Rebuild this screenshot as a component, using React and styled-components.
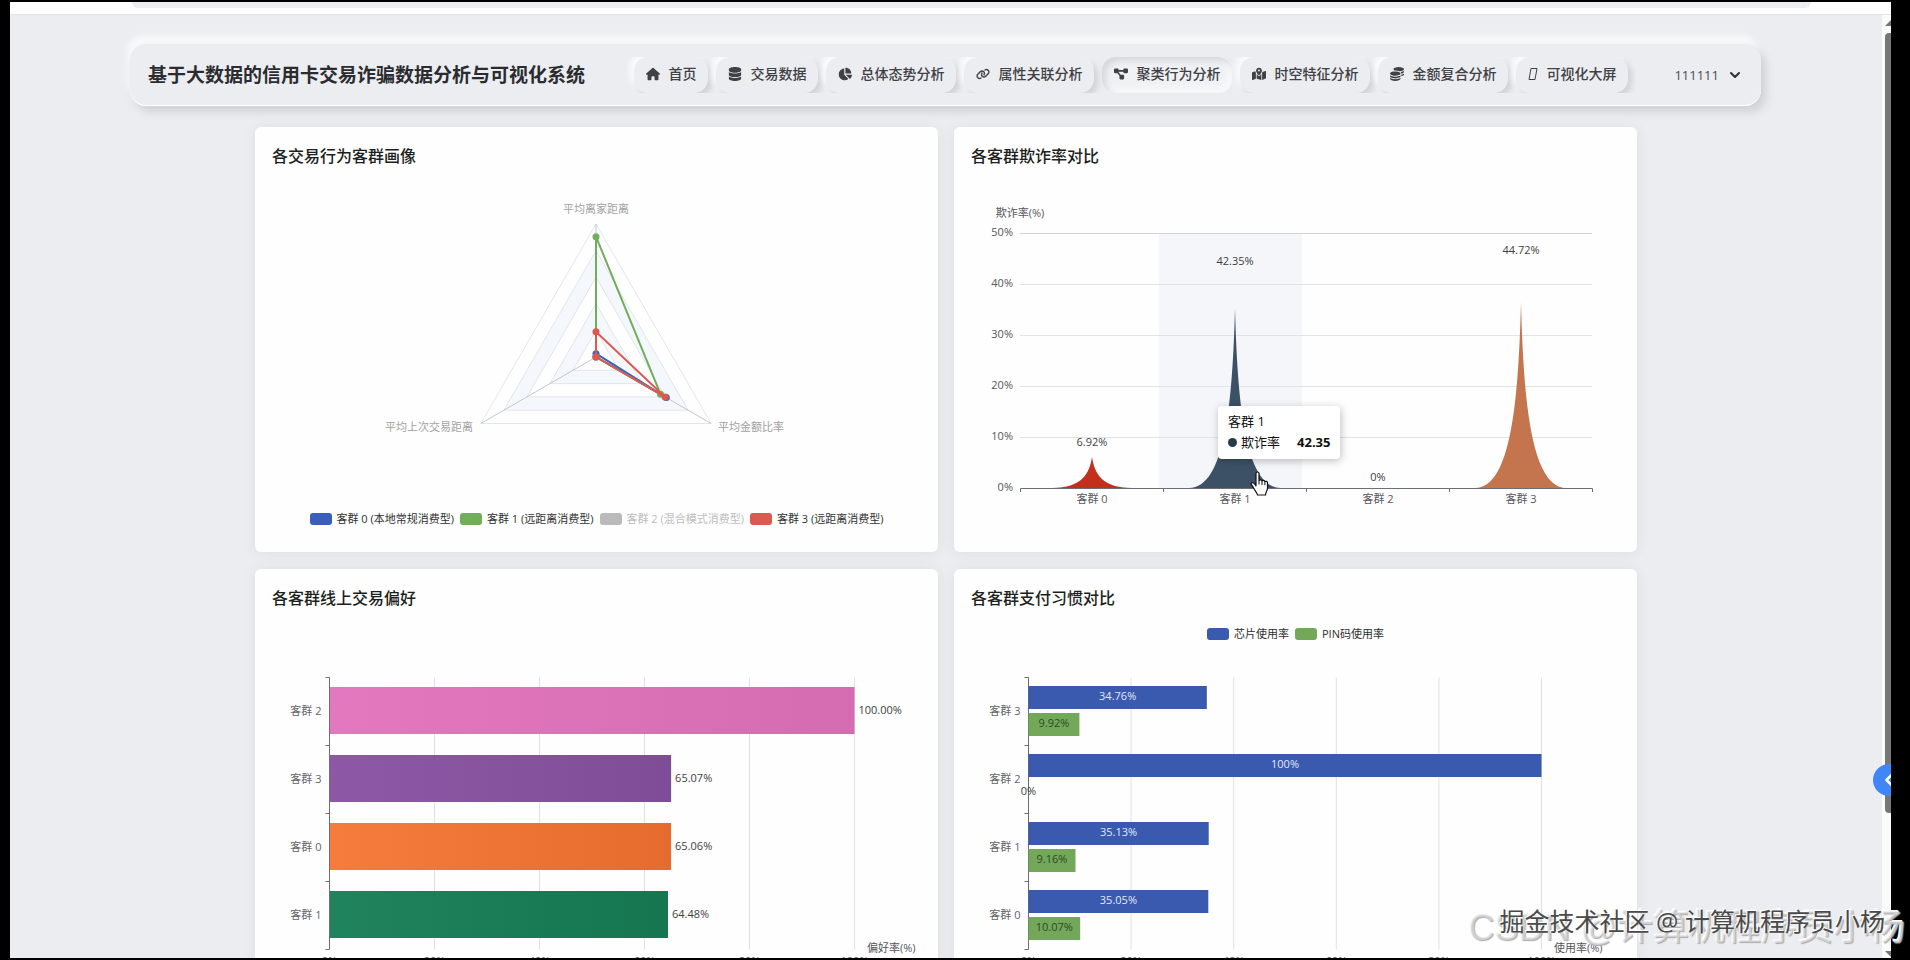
import React from "react";
import styled, { createGlobalStyle, css } from "styled-components";
import {
  FaHouse,
  FaDatabase,
  FaChartPie,
  FaLink,
  FaDiagramProject,
  FaMapLocationDot,
  FaCoins
} from "react-icons/fa6";
import { FiChevronDown, FiChevronLeft } from "react-icons/fi";

const GlobalStyle = createGlobalStyle`
  * {
    box-sizing: border-box;
  }

  body {
    margin: 0;
    background: #000;
    font-family: "Open Sans", "Noto Sans CJK SC", sans-serif;
    color: #303133;
  }

  button {
    font: inherit;
    border: 0;
    padding: 0;
    background: none;
    cursor: pointer;
  }
`;

const Screen = styled.div`
  position: relative;
  display: flex;
  flex-direction: column;
  height: 100vh;
  padding: 2px 19px 2px 10px;
  overflow: hidden;
  background: #000;
`;

const BrowserBar = styled.div`
  flex: none;
  height: 13px;
  padding: 0 80px 0 122px;
  background: #fff;
  border-bottom: 1px solid #e3e4e7;
`;

const AddressBar = styled.div`
  height: 6px;
  border-radius: 0 0 8px 8px;
  background: #edeef2;
`;

const Viewport = styled.div`
  position: relative;
  flex: 1;
  min-height: 0;
  display: flex;
  overflow: hidden;
  background: #ecedf1;
`;

const Page = styled.div`
  flex: 1;
  min-width: 0;
  height: 100%;
  overflow: hidden;
`;

const Header = styled.header`
  display: flex;
  align-items: center;
  height: 62px;
  margin: 29px 121px 0 120px;
  padding: 0 18px;
  border-radius: 16px;
  background: #ecedf1;
  box-shadow: inset 0 -1px 0 #fff, 5px 6px 10px #cfd1d6, -3px -9px 5px #f7f8fa;
`;

const Brand = styled.h1`
  margin: 0;
  font-size: 19px;
  font-weight: 700;
  line-height: 24px;
  white-space: nowrap;
  color: #2a2c30;
`;

/* clips the link shadows above and below the row */
const Nav = styled.nav`
  display: flex;
  gap: 8px;
  margin-left: auto;
  padding: 0 8px;
  overflow: hidden;
`;

const NavLink = styled.a`
  display: flex;
  align-items: center;
  gap: 8px;
  height: 36px;
  padding: 0 12px 2px;
  border-radius: 14px;
  font-size: 14px;
  font-weight: 500;
  line-height: 20px;
  white-space: nowrap;
  text-decoration: none;
  color: #3f4145;
  box-shadow: 4px 4px 6px #d0d2d7, -4px -4px 6px #fcfcfd;

  svg {
    width: auto;
    height: 14px;
  }

  ${props =>
    props.$active &&
    css`
      background: #f0f1f4;
      box-shadow: inset 4px 4px 6px #d6d8dc, inset -4px -4px 6px #f9fafb;
    `}
`;

const UserMenu = styled.button`
  display: flex;
  align-items: center;
  gap: 8px;
  margin-left: 38px;
  font-size: 13px;
  line-height: 20px;
  color: #4a4c50;

  svg {
    width: 16px;
    height: 16px;
    color: #303133;
  }
`;

const Grid = styled.main`
  display: grid;
  grid-template-columns: 1fr 1fr;
  gap: 17px 16px;
  max-width: 1382px;
  margin: 21px auto 0;
`;

const Card = styled.section`
  position: relative;
  min-height: 425px;
  padding-top: 19px;
  border-radius: 6px;
  background: #fefefe;
  box-shadow: 0 1px 14px rgba(70, 60, 20, 0.08);
`;

const CardTitle = styled.h2`
  margin: 0;
  padding: 0 17px;
  font-size: 16px;
  font-weight: 500;
  line-height: 20px;
  color: #1d1e20;
`;

const Chart = styled.svg`
  display: block;
  width: 100%;
  font-size: 11px;
`;

const Legend = styled.div`
  display: flex;
  justify-content: center;
  gap: 6px;
  padding-top: ${props => (props.$top ? "14px" : "0")};
`;

const LegendItem = styled.button`
  display: flex;
  align-items: center;
  gap: 5px;
  font-size: 11px;
  line-height: 24px;
  white-space: nowrap;
  color: ${props => (props.$off ? "#bdbdbd" : "#303030")};

  &::before {
    content: "";
    width: 22px;
    height: 12px;
    border-radius: 3px;
    background: ${props => (props.$off ? "#bababa" : props.$color)};
  }
`;

const Tooltip = styled.div`
  position: absolute;
  left: 264px;
  top: 279px;
  padding: 5px 10px 6px;
  border-radius: 4px;
  background: #fff;
  box-shadow: 1px 2px 9px rgba(0, 0, 0, 0.25);
  font-size: 13px;
  line-height: 21px;
  white-space: nowrap;
  color: #111;
`;

const TooltipRow = styled.div`
  display: flex;
  align-items: center;
  gap: 4px;

  &::before {
    content: "";
    width: 9px;
    height: 9px;
    border-radius: 50%;
    background: #253b4a;
  }

  strong {
    margin-left: 13px;
  }
`;

const Pointer = styled.svg`
  position: absolute;
  left: 295px;
  top: 344px;
  width: 22px;
  height: 26px;
`;

const Scrollbar = styled.div`
  flex: none;
  display: flex;
  flex-direction: column;
  align-items: flex-end;
  width: 9px;
  background: #fbfbfc;

  svg {
    flex: none;
    width: 6px;
    height: 18px;
  }
`;

const Track = styled.div`
  flex: 1;
  width: 6px;
`;

const Thumb = styled.div`
  width: 6px;
  height: 86%;
  border-radius: 4px 0 0 4px;
  background: #757678;
`;

const SideToggle = styled.button`
  position: absolute;
  right: -14px;
  top: 749px;
  display: flex;
  align-items: center;
  justify-content: center;
  width: 32px;
  height: 32px;
  border-radius: 50%;
  background: #3f86f6;
  color: #fff;

  svg {
    width: 20px;
    height: 20px;
  }
`;

const Watermark = styled.div`
  position: absolute;
  z-index: 2;
  white-space: nowrap;
  pointer-events: none;
`;

const BigWatermark = styled(Watermark)`
  right: 5px;
  bottom: 8px;
  font-family: "Liberation Sans", "Noto Sans CJK SC", sans-serif;
  font-size: 36px;
  line-height: 48px;
  color: rgba(232, 232, 234, 0.6);
  text-shadow: 1px 1px 1px #aaa, -1px -1px 0 #fff;
`;

const SmallWatermark = styled(Watermark)`
  right: 25px;
  bottom: 21px;
  font-size: 25px;
  line-height: 36px;
  color: #4a4a4a;
  text-shadow: -1px -1px 0 #fff, -1px 0 0 #eee;
`;

const BoxIcon = () => (
  <svg viewBox="0 0 10 14" fill="none" stroke="currentColor">
    <path d="M3 1.5h6l-2 11h-6z" />
  </svg>
);

const links = [
  { label: "首页", icon: FaHouse },
  { label: "交易数据", icon: FaDatabase },
  { label: "总体态势分析", icon: FaChartPie },
  { label: "属性关联分析", icon: FaLink },
  { label: "聚类行为分析", icon: FaDiagramProject, active: true },
  { label: "时空特征分析", icon: FaMapLocationDot },
  { label: "金额复合分析", icon: FaCoins },
  { label: "可视化大屏", icon: BoxIcon }
];

const segments = [
  { name: "客群 0 (本地常规消费型)", color: "#3a5fbb" },
  { name: "客群 1 (远距离消费型)", color: "#72ad5b" },
  { name: "客群 2 (混合模式消费型)", off: true },
  { name: "客群 3 (远距离消费型)", color: "#dd584e" }
];

const CX = 341;
const CY = 191;
const R = 133;

// values run top, bottom left, bottom right, each 0..1
function radarPoints(values) {
  return values.map((v, i) => {
    const angle = -Math.PI / 2 - (i * 2 * Math.PI) / 3;
    return [CX + R * v * Math.cos(angle), CY + R * v * Math.sin(angle)];
  });
}

const toPath = points => `M${points.map(p => p.join(",")).join("L")}Z`;

const radarSeries = [
  { color: "#3a5fbb", values: [0.025, 0, 0.61] },
  { color: "#72ad5b", values: [0.905, 0, 0.56] },
  { color: "#dd584e", values: [0.19, 0, 0.6] }
];

function RadarChart() {
  return (
    <Chart viewBox="0 0 683 341">
      {[1, 0.8, 0.6, 0.4, 0.2].map((v, i) => (
        <path
          key={v}
          d={toPath(radarPoints([v, v, v]))}
          fill={i % 2 ? "#f4f7fb" : "#fefefe"}
          stroke="#e2e6ec"
        />
      ))}
      {radarPoints([1, 1, 1]).map(([x, y], i) => (
        <line key={i} x1={CX} y1={CY} x2={x} y2={y} stroke="#c4c6ca" />
      ))}
      {radarSeries.map(s => (
        <g key={s.color} fill={s.color}>
          <path
            d={toPath(radarPoints(s.values))}
            fill="none"
            stroke={s.color}
            strokeWidth="2"
          />
          {radarPoints(s.values).map(([x, y], i) => (
            <circle key={i} cx={x} cy={y} r="3.5" />
          ))}
        </g>
      ))}
      <g fill="#a2a2a2">
        <text x={CX} y="47" textAnchor="middle">
          平均离家距离
        </text>
        <text x="218" y="265" textAnchor="end">
          平均上次交易距离
        </text>
        <text x="463" y="265">
          平均金额比率
        </text>
      </g>
    </Chart>
  );
}

const fraud = [
  { name: "客群 0", value: "6.92%", color: "#c2301c", peak: 291, half: 40, labelY: 280 },
  { name: "客群 1", value: "42.35%", color: "#3d5166", peak: 142, half: 46, labelY: 99 },
  { name: "客群 2", value: "0%", labelY: 315 },
  { name: "客群 3", value: "44.72%", color: "#c4754d", peak: 136, half: 46, labelY: 88 }
];

function spike(cx, base, peak, half) {
  const mid = peak + (base - peak) * 0.53;
  return (
    `M${cx - half},${base} C${cx - 10},${base} ${cx - 2.5},${mid} ${cx},${peak} ` +
    `C${cx + 2.5},${mid} ${cx + 10},${base} ${cx + half},${base}Z`
  );
}

function FraudChart() {
  return (
    <Chart viewBox="0 0 683 386">
      <rect x="205" y="68" width="143" height="254" fill="#f4f6fa" />
      {[50, 40, 30, 20, 10, 0].map((v, i) => (
        <g key={v}>
          {v > 0 && (
            <line
              x1="66"
              x2="638"
              y1={67.5 + i * 51}
              y2={67.5 + i * 51}
              stroke={i ? "#e0e3e8" : "#ccd4d9"}
            />
          )}
          <text x="59" y={70 + i * 51} textAnchor="end" fill="#55575b">
            {v}%
          </text>
        </g>
      ))}
      <text x="66" y="51" textAnchor="middle" fill="#55575b">
        欺诈率(%)
      </text>
      {fraud.map((d, i) => {
        const cx = 138 + i * 143;
        return (
          <g key={d.name} textAnchor="middle">
            {d.color && <path d={spike(cx, 322, d.peak, d.half)} fill={d.color} />}
            <text x={cx} y={d.labelY} fill="#3c3e42">
              {d.value}
            </text>
            <text x={cx} y="337" fill="#55575b">
              {d.name}
            </text>
          </g>
        );
      })}
      <path
        d="M66.500,326v-3.500h572v3.500M209.500,322v4M352.500,322v4M495.500,322v4"
        fill="none"
        stroke="#6b6e74"
      />
    </Chart>
  );
}

const online = [
  { name: "客群 2", value: 100, colors: ["#e378be", "#d56bb0"] },
  { name: "客群 3", value: 65.07, colors: ["#8d59a7", "#7f4d97"] },
  { name: "客群 0", value: 65.06, colors: ["#f57c3b", "#e56c2e"] },
  { name: "客群 1", value: 64.48, colors: ["#1f835d", "#157650"] }
];

function CategoryAxis({ top, x, names }) {
  return (
    <g>
      <path
        d={`M${x - 4},${top}h4v272h-4${[68, 136, 204]
          .map(y => `M${x - 4},${top + y}h4`)
          .join("")}`}
        fill="none"
        stroke="#6b6e74"
      />
      {names.map((name, i) => (
        <text key={name} x={x - 8} y={top + 37 + i * 68} textAnchor="end" fill="#626468">
          {name}
        </text>
      ))}
    </g>
  );
}

function ValueAxis({ top, x, step, title, titleX }) {
  return (
    <g fill="#55575b">
      {[0, 1, 2, 3, 4, 5].map(i => (
        <g key={i}>
          {i > 0 && (
            <line
              x1={x + i * step}
              x2={x + i * step}
              y1={top}
              y2={top + 272}
              stroke="#dfe1e5"
            />
          )}
          <text x={x + i * step} y={top + 287} textAnchor="middle">
            {i * 20}%
          </text>
        </g>
      ))}
      <text x={titleX} y={top + 274}>
        {title}
      </text>
    </g>
  );
}

function OnlineChart() {
  const x = 74.5;
  return (
    <Chart viewBox="0 0 683 386">
      <defs>
        {online.map((d, i) => (
          <linearGradient key={d.name} id={`bar${i}`}>
            <stop offset="0" stopColor={d.colors[0]} />
            <stop offset="1" stopColor={d.colors[1]} />
          </linearGradient>
        ))}
      </defs>
      <ValueAxis top={69.5} x={x} step={105} title="偏好率(%)" titleX={612} />
      {online.map((d, i) => (
        <g key={d.name}>
          <rect
            x={x}
            y={79 + i * 68}
            width={d.value * 5.25}
            height="47"
            fill={`url(#bar${i})`}
          />
          <text x={x + d.value * 5.25 + 4} y={106 + i * 68} fill="#3c3e42">
            {d.value.toFixed(2)}%
          </text>
        </g>
      ))}
      <CategoryAxis top={69.5} x={x} names={online.map(d => d.name)} />
    </Chart>
  );
}

const payments = [
  { name: "客群 3", chip: 34.76, pin: 9.92 },
  { name: "客群 2", chip: 100, pin: 0 },
  { name: "客群 1", chip: 35.13, pin: 9.16 },
  { name: "客群 0", chip: 35.05, pin: 10.07 }
];

function PaymentChart() {
  const x = 74.5;
  const scale = 5.13;
  return (
    <Chart viewBox="0 0 683 348">
      <ValueAxis top={31.5} x={x} step={102.6} title="使用率(%)" titleX={600} />
      <CategoryAxis top={31.5} x={x} names={payments.map(d => d.name)} />
      {payments.map((d, i) => (
        <g key={d.name} textAnchor="middle">
          <rect x={x} y={40 + i * 68} width={d.chip * scale} height="23" fill="#3a5ab0" />
          <text x={x + (d.chip * scale) / 2} y={54 + i * 68} fill="#e2e8f7">
            {d.chip}%
          </text>
          <rect x={x} y={67 + i * 68} width={d.pin * scale} height="23" fill="#73a75a" />
          <text
            x={x + (d.pin * scale) / 2}
            y={81 + i * 68}
            fill={d.pin ? "#2f4a26" : "#3a3c40"}
          >
            {d.pin}%
          </text>
        </g>
      ))}
    </Chart>
  );
}

export default function App() {
  return (
    <Screen>
      <GlobalStyle />
      <BrowserBar>
        <AddressBar />
      </BrowserBar>
      <Viewport>
        <Page>
          <Header>
            <Brand>基于大数据的信用卡交易诈骗数据分析与可视化系统</Brand>
            <Nav>
              {links.map(({ label, icon: Icon, active }) => (
                <NavLink key={label} href="#" $active={active}>
                  <Icon />
                  {label}
                </NavLink>
              ))}
            </Nav>
            <UserMenu type="button">
              111111
              <FiChevronDown strokeWidth={3} />
            </UserMenu>
          </Header>
          <Grid>
            <Card>
              <CardTitle>各交易行为客群画像</CardTitle>
              <RadarChart />
              <Legend>
                {segments.map(s => (
                  <LegendItem key={s.name} type="button" $color={s.color} $off={s.off}>
                    {s.name}
                  </LegendItem>
                ))}
              </Legend>
            </Card>
            <Card>
              <CardTitle>各客群欺诈率对比</CardTitle>
              <FraudChart />
              <Tooltip>
                客群 1
                <TooltipRow>
                  欺诈率 <strong>42.35</strong>
                </TooltipRow>
              </Tooltip>
              <Pointer viewBox="0 0 22 26">
                <path
                  d="M7 2.500c0-1 .7-1.500 1.500-1.500s1.500.5 1.500 1.500v7c.3-.8 2.700-.8 3 .4.500-.8 2.600-.6 2.900.7.700-.6 2.600-.3 2.600 1.200v5.200c0 3-2 4-2 7H8.500c0-2-3-4.500-4-7.300C3.800 15 2 13.500 2.200 12.600c.4-1.300 2.300-1 3.300.3L7 14.800z"
                  fill="#fff"
                  stroke="#111"
                  strokeWidth="1.200"
                  strokeLinejoin="round"
                />
                <path d="M10 9.500v4M13 10v4M15.900 10.800v3.400" stroke="#111" />
              </Pointer>
            </Card>
            <Card>
              <CardTitle>各客群线上交易偏好</CardTitle>
              <OnlineChart />
            </Card>
            <Card>
              <CardTitle>各客群支付习惯对比</CardTitle>
              <Legend $top>
                <LegendItem type="button" $color="#3a5ab0">
                  芯片使用率
                </LegendItem>
                <LegendItem type="button" $color="#73a75a">
                  PIN码使用率
                </LegendItem>
              </Legend>
              <PaymentChart />
            </Card>
          </Grid>
        </Page>
        <Scrollbar>
          <svg viewBox="0 0 6 18">
            <path d="M6 5v6H0z" fill="#757678" />
          </svg>
          <Track>
            <Thumb />
          </Track>
          <svg viewBox="0 0 6 18">
            <path d="M0 11h6v6z" fill="#757678" />
          </svg>
        </Scrollbar>
        <SideToggle type="button" aria-label="展开">
          <FiChevronLeft strokeWidth={3} />
        </SideToggle>
      </Viewport>
      <BigWatermark>CSDN @计算机程序员小杨</BigWatermark>
      <SmallWatermark>掘金技术社区 @ 计算机程序员小杨</SmallWatermark>
    </Screen>
  );
}
